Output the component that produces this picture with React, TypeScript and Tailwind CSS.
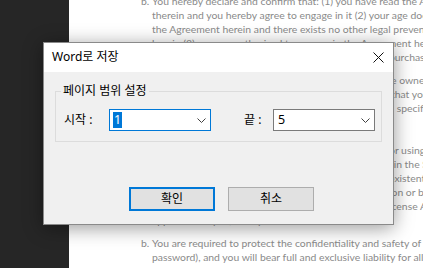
import React from 'react';

const Chevron = () => (
  <svg width="9" height="5" viewBox="0 0 9 5" className="shrink-0">
    <path d="M0.5 0.5 L4.5 4.5 L8.5 0.5" fill="none" stroke="#404040" strokeWidth="1" />
  </svg>
);

const CloseIcon = () => (
  <svg width="11" height="11" viewBox="0 0 11 11">
    <path d="M0.5 0.5 L10.5 10.5 M10.5 0.5 L0.5 10.5" fill="none" stroke="#111" strokeWidth="1" />
  </svg>
);

// right-side fragments of document lines that stick out past the dialog
const Frag = ({ x, children }: { x: number; children?: React.ReactNode }) => (
  <div className="h-[14px]" style={{ paddingLeft: x - 141 }}>
    {children}
  </div>
);

const Document = () => (
  <div className="flex-1 bg-white overflow-hidden text-[10.4px] leading-[14px] text-[#8a8a8a] font-['Lato',sans-serif]">
    <div className="-mt-[6px] pl-[72px] whitespace-nowrap">
      <div className="mb-[9px]">
        <div className="flex h-[14px]">
          <span className="w-[11px] shrink-0">b.</span>
          <span>You hereby declare and confirm that: (1) you have read the Agreement</span>
        </div>
        <div className="pl-[11px] h-[14px]">therein and you hereby agree to engage in it (2) your age does not</div>
        <div className="pl-[11px] h-[14px]">the Agreement herein and there exists no other legal prevention</div>
        <div className="pl-[11px] h-[14px]">herein (3) you are authorized to engage in the Agreement herein</div>
        <Frag x={389}>purchase</Frag>
      </div>
      <div className="mb-[9px]">
        <Frag x={391}>e owner</Frag>
        <Frag x={391}>that you</Frag>
        <Frag x={394}>&nbsp;specific</Frag>
        <Frag x={394} />
        <Frag x={394} />
        <Frag x={389}>or using</Frag>
        <Frag x={391}>&nbsp;in the S</Frag>
        <Frag x={389}>existent</Frag>
        <Frag x={389}>ion or be</Frag>
        <Frag x={389}>icense A</Frag>
        <div className="pl-[11px] h-[14px]">applicable to you, or any of the terms herein</div>
      </div>
      <div>
        <div className="flex h-[14px]">
          <span className="w-[11px] shrink-0">b.</span>
          <span>You are required to protect the confidentiality and safety of the</span>
        </div>
        <div className="pl-[11px] h-[14px]">password), and you will bear full and exclusive liability for all actions</div>
      </div>
    </div>
  </div>
);

const Select = ({ value, focused }: { value: string; focused?: boolean }) => (
  <div
    className={
      'w-[102px] h-[22px] bg-white flex items-center justify-between pl-[3px] pr-[4px] border ' +
      (focused ? 'border-[#0078d7]' : 'border-[#7a7a7a]')
    }
  >
    <span
      className={
        "px-[1px] h-[16px] leading-[16px] text-[12.5px] font-['Noto_Sans',sans-serif] " +
        (focused ? 'bg-[#0078d7] text-white' : 'text-black')
      }
    >
      {value}
    </span>
    <Chevron />
  </div>
);

const SaveDialog = () => (
  <div className="absolute left-[43px] top-[42px] w-[351px] h-[183px] flex flex-col border border-[#8a8a8a] bg-[#f0f0f0] shadow-[0_3px_18px_rgba(0,0,0,0.4)] text-[12px] text-black font-['Noto_Sans','Noto_Sans_CJK_KR',sans-serif]">
    <div className="h-[29px] bg-white flex items-center justify-between pl-[8px] pr-[9px]">
      <span className="leading-[16px] -mt-[2px]">Word로 저장</span>
      <CloseIcon />
    </div>
    <div className="flex-1 px-[11px] pt-[11px] flex flex-col">
      <fieldset className="border border-[#dcdcdc] pb-[10px]">
        <legend className="ml-[5px] px-[2px] leading-[16px]">페이지 범위 설정</legend>
        <div className="flex items-center pt-[10px] pl-[8px]">
          <span className="w-[45px] leading-[16px]">시작 :</span>
          <Select value="1" focused />
          <span className="ml-[33px] w-[29px] leading-[16px]">끝 :</span>
          <Select value="5" />
        </div>
      </fieldset>
      <div className="flex gap-[13px] mt-[45px] ml-[74px]">
        <button className="w-[86px] h-[24px] bg-[#e1e1e1] border-2 border-[#0078d7] leading-[16px]">확인</button>
        <button className="w-[86px] h-[24px] bg-[#e1e1e1] border border-[#adadad] leading-[16px]">취소</button>
      </div>
    </div>
  </div>
);

export default function App() {
  return (
    <div className="relative w-[423px] h-[268px] overflow-hidden flex bg-[#262626]">
      <div className="w-[69px] shrink-0" />
      <Document />
      <SaveDialog />
    </div>
  );
}
